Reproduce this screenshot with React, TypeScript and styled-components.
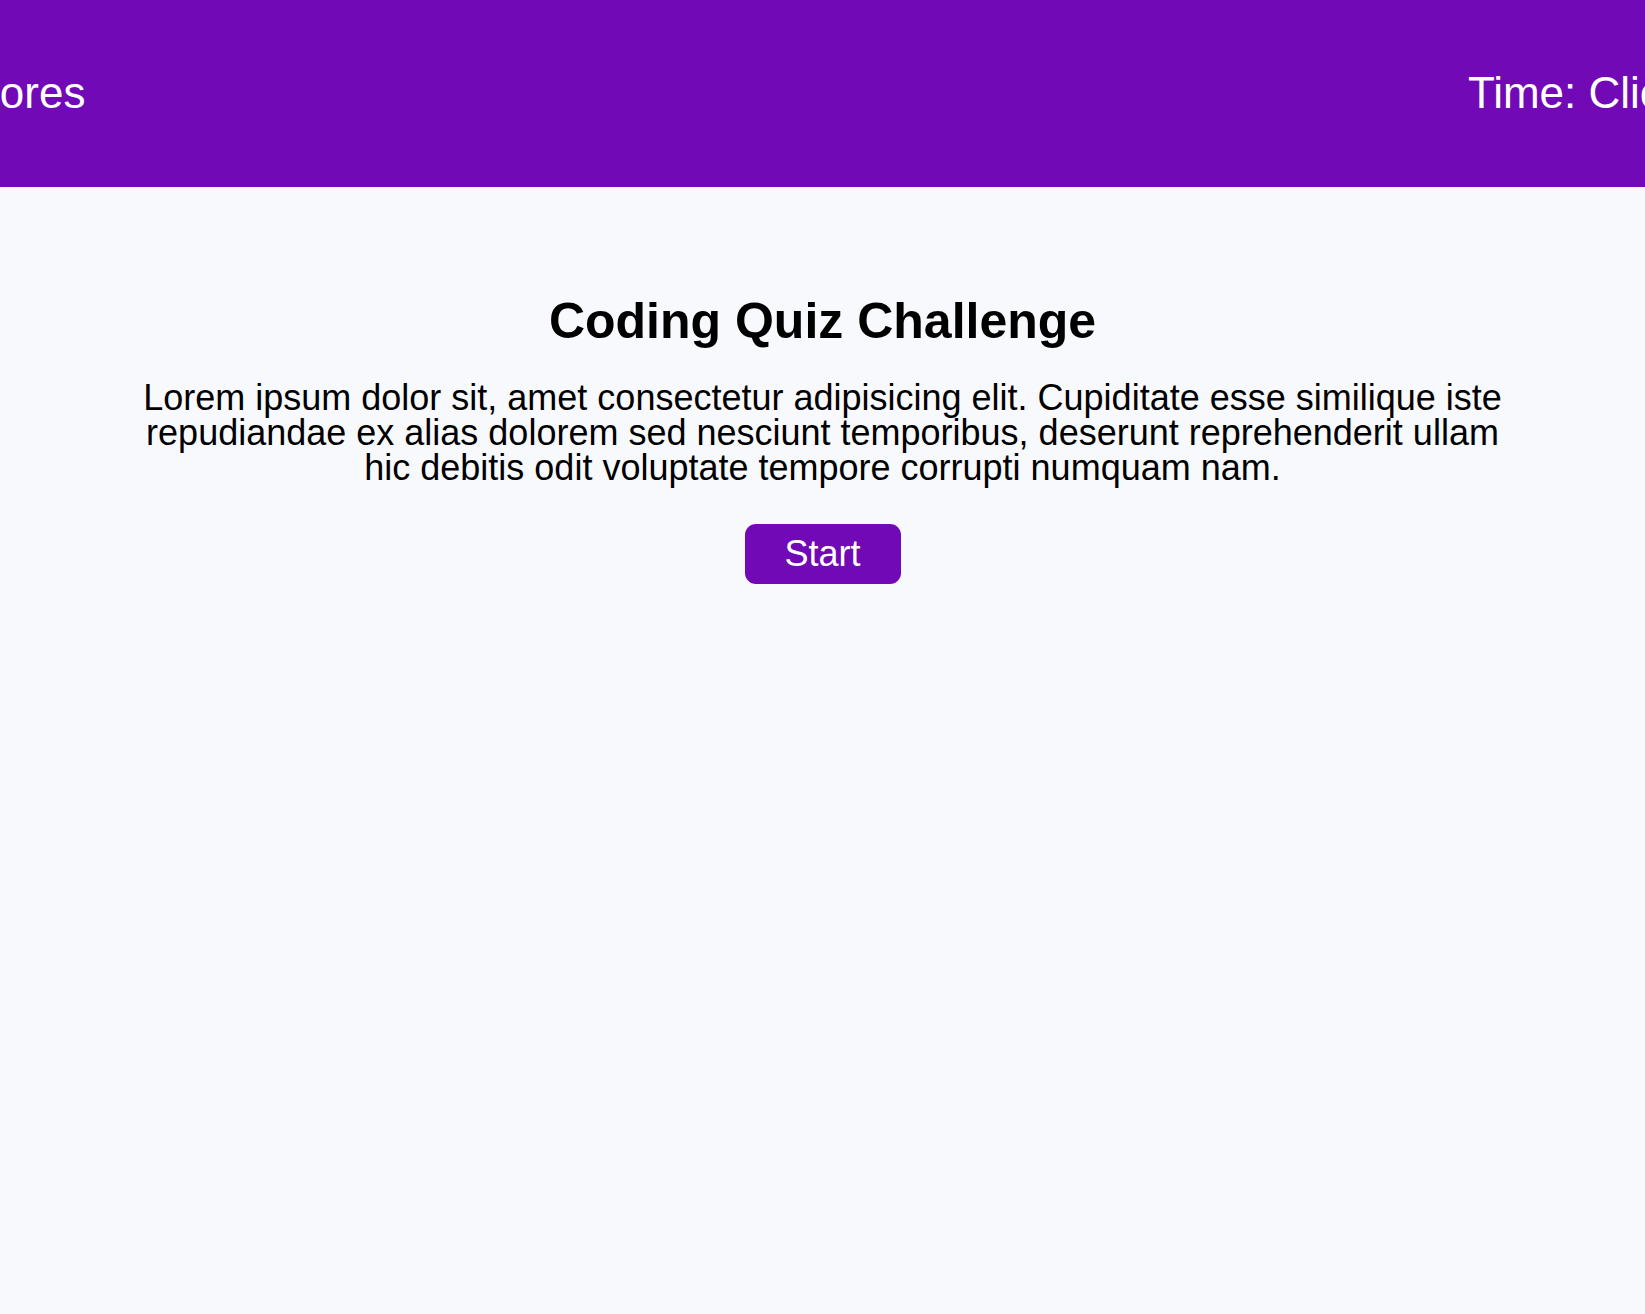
import React from "react";
import styled, { createGlobalStyle } from "styled-components";

const Global = createGlobalStyle`
  html, body { margin: 0; padding: 0; }
  body {
    background: #f8f9fd;
    font-family: "Liberation Sans", Arial, sans-serif;
    color: #000;
    min-height: 1314px;
  }
`;

const Header = styled.header`
  height: 187px;
  background: #7209b7;
  color: #fff;
  display: flex;
  align-items: center;
  justify-content: space-between;
  overflow: hidden;
  font-size: 44px;
`;

const HeaderItem = styled.div<{ $offset: number; $side: "left" | "right" }>`
  flex: none;
  white-space: nowrap;
  padding-bottom: 2px;
  ${(p) => (p.$side === "left" ? `margin-left: ${p.$offset}px;` : `margin-right: ${p.$offset}px;`)}
`;

const Main = styled.main`
  display: flex;
  flex-direction: column;
  align-items: center;
  padding-top: 106px;
`;

const Title = styled.h1`
  margin: 0;
  font-size: 50px;
  font-weight: 700;
  line-height: 1.15;
`;

const Text = styled.p`
  margin: 29px 0 0;
  max-width: 1385px;
  font-size: 36px;
  line-height: 35px;
  text-align: center;
`;

const StartButton = styled.button`
  margin-top: 39px;
  width: 156px;
  height: 60px;
  border: none;
  border-radius: 11px;
  background: #7209b7;
  color: #fff;
  font-family: "Liberation Sans", Arial, sans-serif;
  font-size: 36px;
  cursor: pointer;
`;

export default function App() {
  return (
    <>
      <Global />
      <Header>
        <HeaderItem $side="left" $offset={-261}>View High Scores</HeaderItem>
        <HeaderItem $side="right" $offset={-144}>Time: Click Start</HeaderItem>
      </Header>
      <Main>
        <Title>Coding Quiz Challenge</Title>
        <Text>
          Lorem ipsum dolor sit, amet consectetur adipisicing elit. Cupiditate esse similique iste
          repudiandae ex alias dolorem sed nesciunt temporibus, deserunt reprehenderit ullam hic
          debitis odit voluptate tempore corrupti numquam nam.
        </Text>
        <StartButton>Start</StartButton>
      </Main>
    </>
  );
}
